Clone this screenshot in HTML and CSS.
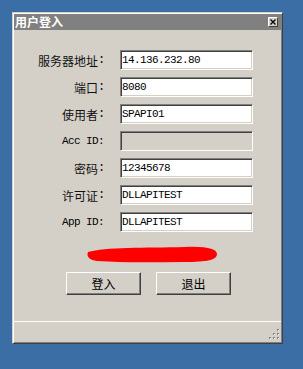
FILE: index.html
```html
<!doctype html>
<html lang="zh-CN">

<head>
  <meta charset="utf-8">
  <meta name="viewport" content="width=device-width, initial-scale=1.0">
  <title>用户登入</title>
  <link rel="stylesheet" href="styles.css">
</head>

<body>
  <div class="window">
    <div class="titlebar">
      <span class="title">用户登入</span>
      <span class="close">
        <svg width="6" height="6" viewBox="0 0 6 6"><path d="M0.5 0.5 L5.5 5.5 M5.5 0.5 L0.5 5.5" stroke="#000" stroke-width="1.3"/></svg>
      </span>
    </div>

    <div class="form">
      <label class="cn">服务器地址<span class="colon">:</span></label>
      <input class="field" type="text" value="14.136.232.80">

      <label class="cn">端口<span class="colon">:</span></label>
      <input class="field" type="text" value="8080">

      <label class="cn">使用者<span class="colon">:</span></label>
      <input class="field" type="text" value="SPAPI01">

      <label class="en">Acc ID:</label>
      <input class="field disabled" type="text" value="" disabled>

      <label class="cn">密码<span class="colon">:</span></label>
      <input class="field" type="text" value="12345678">

      <label class="cn">许可证<span class="colon">:</span></label>
      <input class="field" type="text" value="DLLAPITEST">

      <label class="en">App ID:</label>
      <input class="field" type="text" value="DLLAPITEST">
    </div>

    <!-- redacted line -->
    <div class="scribble">
      <svg width="133" height="17" viewBox="0 0 133 17"><path d="M3 6 C20 1 60 2 100 1 C122 0 132 3 132 8 C132 14 122 16 100 16 C70 16 40 17 12 15 C5 14 1 11 3 6 Z" fill="#ff0000"/></svg>
    </div>

    <div class="buttons">
      <button class="button">登入</button>
      <button class="button">退出</button>
    </div>

    <div class="spacer"></div>
    <hr class="separator">

    <div class="status">
      <svg class="grip" width="11" height="11" viewBox="0 0 11 11">
        <rect x="8" y="0" width="2" height="2" fill="#808080"/>
        <rect x="4" y="4" width="2" height="2" fill="#808080"/>
        <rect x="8" y="4" width="2" height="2" fill="#808080"/>
        <rect x="0" y="8" width="2" height="2" fill="#808080"/>
        <rect x="4" y="8" width="2" height="2" fill="#808080"/>
        <rect x="8" y="8" width="2" height="2" fill="#808080"/>
        <rect x="9" y="1" width="1" height="1" fill="#fff"/>
        <rect x="5" y="5" width="1" height="1" fill="#fff"/>
        <rect x="9" y="5" width="1" height="1" fill="#fff"/>
        <rect x="1" y="9" width="1" height="1" fill="#fff"/>
        <rect x="5" y="9" width="1" height="1" fill="#fff"/>
        <rect x="9" y="9" width="1" height="1" fill="#fff"/>
      </svg>
    </div>
  </div>
</body>
</html>
```

FILE: styles.css
```css
html {
  font-family: "Noto Sans CJK SC", "Liberation Sans", sans-serif;
  font-size: 12px;
}

body {
  margin: 0;
  height: 369px;
  background-color: #3A6EA5; /* desktop blue */
}

.window {
  box-sizing: border-box;
  margin: 12px 0 0 12px;
  width: 271px;
  height: 332px;
  background-color: #D4D0C8;
  border: 1px solid #D4D0C8;
  border-right-color: #404040;
  border-bottom-color: #404040;
  box-shadow: inset 1px 1px 0 #fff, inset -1px -1px 0 #808080;
  padding: 1px;
  display: flex;
  flex-direction: column;
}

.titlebar {
  height: 16px;
  background-color: #808080;
  display: flex;
  align-items: center;
  justify-content: space-between;
}

.title {
  color: #fff;
  font-weight: 700;
  font-size: 12px;
  line-height: 16px;
  padding-left: 1px;
}

.close {
  box-sizing: border-box;
  width: 10px;
  height: 10px;
  margin-right: 3px;
  background-color: #D4D0C8;
  border: 1px solid #fff;
  border-right-color: #404040;
  border-bottom-color: #404040;
  display: flex;
  align-items: center;
  justify-content: center;
}

.close svg {
  display: block;
}

.form {
  margin-top: 20px;
  display: grid;
  grid-template-columns: 90px 133px;
  grid-auto-rows: 20px;
  column-gap: 16px;
  row-gap: 7px;
  align-items: center;
}

label {
  height: 20px;
  display: flex;
  align-items: center;
  justify-content: flex-end;
  color: #000;
  white-space: pre;
}

.cn {
  color: #111;
}

.colon {
  width: 6px;
  text-align: center;
  font-family: "Liberation Mono", monospace;
  line-height: 1;
}

.en {
  font-family: "Liberation Mono", monospace;
  font-size: 11px;
  letter-spacing: -0.6px;
}

.field {
  box-sizing: border-box;
  width: 133px;
  height: 20px;
  margin: 0;
  padding: 0 0 0 1px;
  background-color: #fff;
  border: 1px solid #808080;
  border-right-color: #fff;
  border-bottom-color: #fff;
  box-shadow: inset 1px 1px 0 #404040, inset -1px -1px 0 #D4D0C8;
  font-family: "Liberation Mono", monospace;
  font-size: 11px;
  letter-spacing: -0.6px;
  color: #000;
  outline: none;
}

.disabled {
  background-color: #D4D0C8;
}

.scribble {
  margin: 14px 0 0 71px;
  height: 17px;
}

.scribble svg {
  display: block;
}

.buttons {
  margin-top: 9px;
  display: flex;
  justify-content: center;
  gap: 15px;
  padding-left: 2px;
}

.button {
  box-sizing: border-box;
  width: 75px;
  height: 23px;
  margin: 0;
  padding: 0;
  background-color: #D4D0C8;
  border: 1px solid #fff;
  border-right-color: #404040;
  border-bottom-color: #404040;
  box-shadow: inset -1px -1px 0 #808080;
  font-family: "Noto Sans CJK SC", sans-serif;
  font-size: 12px;
  color: #000;
}

.spacer {
  flex: 1;
}

.separator {
  border: 0;
  border-top: 1px solid #fff;
  margin: 0;
}

.status {
  height: 20px;
  display: flex;
  justify-content: flex-end;
  align-items: flex-end;
}

.grip {
  display: block;
  margin: 0 1px 2px 0;
}
```
